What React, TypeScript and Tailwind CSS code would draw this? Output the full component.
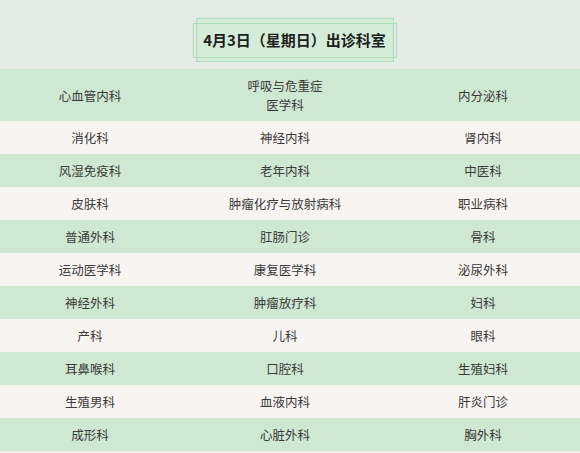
import React from "react";

const rows: [string, string, string][] = [
  ["心血管内科", "呼吸与危重症\n医学科", "内分泌科"],
  ["消化科", "神经内科", "肾内科"],
  ["风湿免疫科", "老年内科", "中医科"],
  ["皮肤科", "肿瘤化疗与放射病科", "职业病科"],
  ["普通外科", "肛肠门诊", "骨科"],
  ["运动医学科", "康复医学科", "泌尿外科"],
  ["神经外科", "肿瘤放疗科", "妇科"],
  ["产科", "儿科", "眼科"],
  ["耳鼻喉科", "口腔科", "生殖妇科"],
  ["生殖男科", "血液内科", "肝炎门诊"],
  ["成形科", "心脏外科", "胸外科"],
];

export default function App() {
  return (
    <div
      className="w-[580px] h-[453px] bg-[#eef3ef] overflow-hidden"
      style={{ fontFamily: '"Noto Sans CJK SC", "Noto Sans", sans-serif' }}
    >
      {/* 标题 */}
      <div className="h-[69px] bg-[#e3ede5] flex justify-center pt-[18px] pl-[9px]">
        <div className="relative w-[198px] h-[44px] border border-[#acdcb8] bg-[#d4ecd8]">
          <div className="absolute -left-[4px] -right-[4px] top-[4px] bottom-[3px] border border-[#acdcb8]" />
          <div className="relative h-full flex items-center justify-center text-[15px] font-bold text-[#1e1e1e]">
            4月3日（星期日）出诊科室
          </div>
        </div>
      </div>

      {/* 科室列表 */}
      <div className="flex flex-col">
        {rows.map((row, idx) => (
          <div
            key={idx}
            className={`grid grid-cols-[180px_210px_186px] items-center text-[12.5px] text-[#3a3a3a] ${
              idx === 0 ? "h-[52px]" : "h-[33px]"
            } ${idx % 2 === 0 ? "bg-[#cfe8d1]" : "bg-[#f8f4f1]"}`}
          >
            {row.map((cell, j) => (
              <div key={j} className="text-center whitespace-pre-line leading-[19px]">
                {cell}
              </div>
            ))}
          </div>
        ))}
      </div>
    </div>
  );
}
